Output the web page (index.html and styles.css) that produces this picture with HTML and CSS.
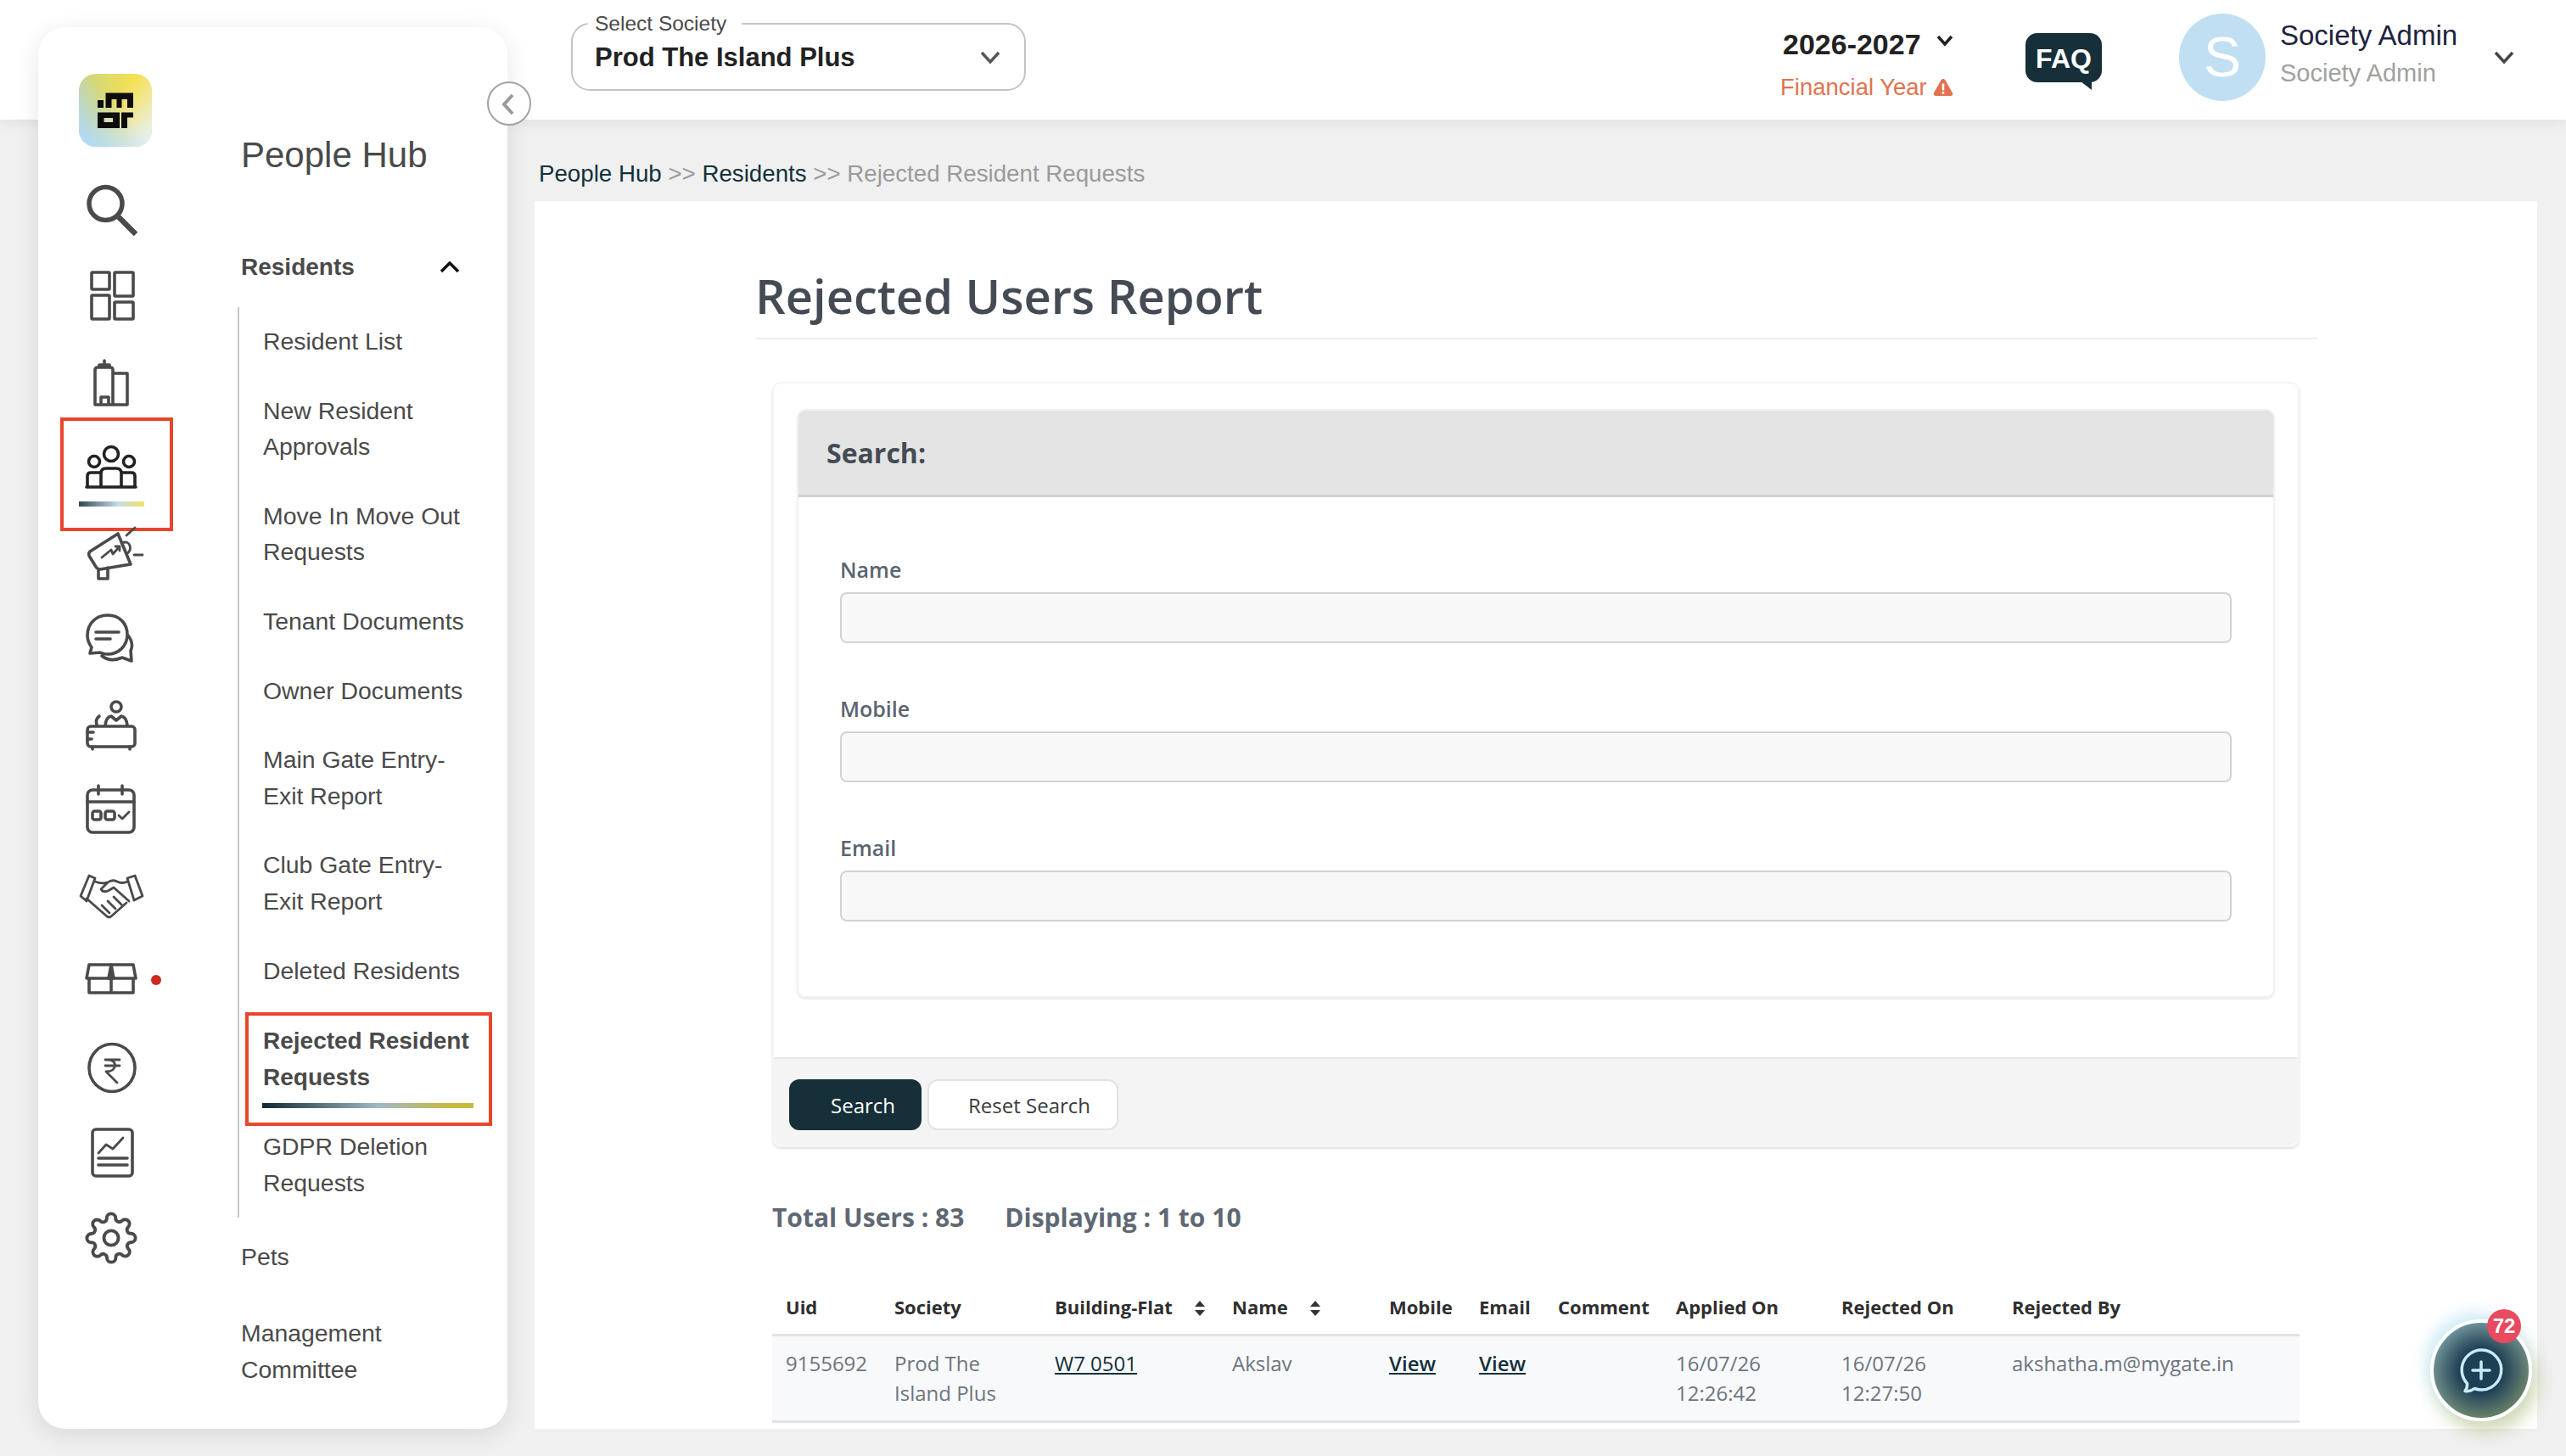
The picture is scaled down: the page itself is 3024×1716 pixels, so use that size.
FILE: index.html
```html
<!DOCTYPE html>
<html lang="en">
    <head>
        <meta charset="UTF-8">
        <meta name="viewport" content="width=device-width, initial-scale=1.0">
        <title>Rejected Users Report</title>
        <link rel="stylesheet" href="styles.css">
    </head>
    <body>
        <div class="app">
            <header class="topbar">
                <fieldset class="society-select">
                    <legend>Select Society</legend>
                    <span class="society-name">Prod The Island Plus</span>
                    <svg class="society-caret" viewBox="0 0 24 16"><path d="M2 2l10 11L22 2"/></svg>
                </fieldset>
                <div class="year-block">
                    <div class="year-value">
                        <span>2026-2027</span>
                        <svg class="year-caret" viewBox="0 0 20 14"><path d="M2 2l8 9 8-9"/></svg>
                    </div>
                    <div class="year-label">
                        <span>Financial Year</span>
                        <svg class="warn-icon" viewBox="0 0 24 22"><path d="M12 1c1 0 2 .6 2.500 1.500l8.500 15c1 1.800-.2 3.500-2 3.500H3c-1.800 0-3-1.700-2-3.500l8.500-15C10 1.600 11 1 12 1z" fill="#e0734f"/><rect x="10.700" y="6.500" width="2.600" height="8" fill="#fff"/><rect x="10.700" y="16" width="2.600" height="2.600" fill="#fff"/></svg>
                    </div>
                </div>
                <div class="faq-bubble">FAQ</div>
                <div class="avatar">S</div>
                <div class="user-block">
                    <div class="user-name">Society Admin</div>
                    <div class="user-role">Society Admin</div>
                </div>
                <svg class="user-caret" viewBox="0 0 24 16"><path d="M2 2l10 11L22 2"/></svg>
            </header>

            <aside class="sidebar">
                <button class="collapse-btn">
                    <svg viewBox="0 0 20 28"><path d="M15 3L5 14l10 11"/></svg>
                </button>
                <nav class="rail">
                    <svg class="logo" viewBox="0 0 86 86">
                        <defs>
                            <linearGradient id="logoBlue" x1="0" y1="1" x2="0.8" y2="0.2">
                                <stop offset="0.1" stop-color="#b0daf8"/>
                                <stop offset="0.7" stop-color="#b0daf8" stop-opacity="0"/>
                            </linearGradient>
                            <linearGradient id="logoBase" x1="0" y1="0" x2="1" y2="0">
                                <stop offset="0" stop-color="#c9d58a"/>
                                <stop offset="0.75" stop-color="#f5e04f"/>
                            </linearGradient>
                            <linearGradient id="logoFade" x1="0.4" y1="0.4" x2="1" y2="1">
                                <stop offset="0" stop-color="#f0f0dc" stop-opacity="0"/>
                                <stop offset="0.8" stop-color="#e8f0ea"/>
                            </linearGradient>
                        </defs>
                        <rect width="86" height="86" rx="20" fill="url(#logoBase)"/>
                        <rect width="86" height="86" rx="20" fill="url(#logoFade)"/>
                        <rect width="86" height="86" rx="20" fill="url(#logoBlue)"/>
                        <path d="M22 31h7v9h-7zM31.500 22.500H64V40h-7V30h-6.500v10h-6V30H38.500v10h-7zM22 45.500h26V64H22zM29.500 52v5H40v-5zM50 45.500h14v6h-7V64h-7z" fill="#0c0c0c" fill-rule="evenodd"/>
                    </svg>
                    <div class="rail-slot">
                        <svg class="rail-icon" viewBox="0 0 72 72"><circle cx="29.500" cy="29" r="19.500" stroke-width="5.500"/><path d="M44 44l21 21" stroke-width="6.500" stroke-linecap="butt"/></svg>
                    </div>
                    <div class="rail-slot">
                        <svg class="rail-icon" viewBox="0 0 72 72"><rect x="13" y="9" width="21" height="20" rx="1"/><rect x="40" y="9" width="22" height="28" rx="1"/><rect x="13" y="36" width="21" height="28" rx="1"/><rect x="40" y="44" width="22" height="20" rx="1"/></svg>
                    </div>
                    <div class="rail-slot">
                        <svg class="rail-icon" viewBox="0 0 72 72"><path d="M17 64V23q0-3 3-3h15q3 0 3 3v41zM38 27h17v37H38M22 20v-3h12v3M28 17v-5M24 64V55h9v9"/></svg>
                    </div>
                    <div class="rail-slot is-active">
                        <svg class="rail-icon is-dark" viewBox="0 0 72 72"><circle cx="36" cy="21" r="8.500"/><circle cx="16" cy="30" r="6.500"/><circle cx="57" cy="30" r="6.500"/><path d="M8 60V47q0-4 4-4h12M64 60V47q0-4-4-4H48M24 60V44q0-6 6-6h12q6 0 6 6v16M7 60h58"/></svg>
                        <span class="rail-bar"></span>
                        <span class="mark-box rail-mark"></span>
                    </div>
                    <div class="rail-slot">
                        <svg class="rail-icon" viewBox="0 0 72 72"><path d="M11 35L44 14l15 36-36 6q-3 0-5-3l-8-13q-1-3 1-5zM21 56v11h11V54"/><path class="thin" d="M25 42l11-9 2 5 8-9M41 29h5v5M48 25q8-3 10 3t-4 10M63 39h10M54 16l10-9"/></svg>
                    </div>
                    <div class="rail-slot">
                        <svg class="rail-icon" viewBox="0 0 72 72"><path d="M11 54l2-7q-5-7-5-14c0-14 10-24 24-24s23 10 23 23-10 23-23 23q-5 0-9-2zM18 29h27M18 37h17M56 33q7 9 3 18l1 12-11-4q-14 6-24-2"/></svg>
                    </div>
                    <div class="rail-slot">
                        <svg class="rail-icon" viewBox="0 0 72 72"><circle cx="42" cy="16" r="6"/><path d="M29 38q1-10 7-11l6 5 6-5q6 1 7 11M19 37q-2-6 3-10"/><rect x="8" y="39" width="56" height="24" rx="4"/><path d="M8 46h7M8 54h5M14 63v3M58 63v3"/></svg>
                    </div>
                    <div class="rail-slot">
                        <svg class="rail-icon" viewBox="0 0 72 72"><rect x="8" y="13" width="55" height="50" rx="6"/><path d="M8 27h55M21 8v10M49 8v10"/><path class="thin" d="M45 43l4 4 8-8"/><rect x="14" y="38" width="10" height="10" rx="2.500"/><rect x="29" y="38" width="11" height="10" rx="2.500"/></svg>
                    </div>
                    <div class="rail-slot">
                        <svg class="rail-icon" viewBox="0 0 72 72"><path class="thin" d="M0 37l10-24 7 3-10 27zM73 37L64 13l-9 3 8 26zM17 20q8 3 14 1M55 20q-6 3-12 0-6-3-11 1L24 29q3 5 10 1l5-3 18 16M7 40l24 21q3 2 5 0l18-16M25 48l9 9M32 43l9 9M39 38l9 9"/></svg>
                    </div>
                    <div class="rail-slot">
                        <svg class="rail-icon" viewBox="0 0 72 72"><path d="M10 33V50H62V33M7 33L10 17H62L65 33zM36 17V50"/><path d="M33 33l3-16 3 16z" fill="#4a4a4a"/></svg>
                        <span class="rail-dot"></span>
                    </div>
                    <div class="rail-slot">
                        <svg class="rail-icon" viewBox="0 0 72 72"><ellipse cx="37" cy="37.500" rx="27" ry="28"/><path class="thin" d="M29 28h17M29 35h17M33 28c10 0 11 14-3 14l13 13"/></svg>
                    </div>
                    <div class="rail-slot">
                        <svg class="rail-icon" viewBox="0 0 72 72"><rect x="14" y="9" width="47" height="55" rx="4"/><path class="thin" d="M21 37l9-10 8 5 12-13"/><path d="M21 43h34M21 51h34"/></svg>
                    </div>
                    <div class="rail-slot">
                        <svg class="rail-icon" viewBox="0 0 72 72"><g transform="translate(4.800 4.800) scale(2.600)" stroke-width="1.500"><circle cx="12" cy="12" r="3.300"/><path d="M19.400 15a1.650 1.650 0 0 0 .33 1.820l.06.06a2 2 0 0 1 0 2.830 2 2 0 0 1-2.830 0l-.06-.06a1.650 1.650 0 0 0-1.820-.33 1.650 1.650 0 0 0-1 1.510V21a2 2 0 0 1-2 2 2 2 0 0 1-2-2v-.09A1.650 1.650 0 0 0 9 19.400a1.650 1.650 0 0 0-1.820.33l-.06.06a2 2 0 0 1-2.830 0 2 2 0 0 1 0-2.830l.06-.06a1.650 1.650 0 0 0 .33-1.820 1.650 1.650 0 0 0-1.510-1H3a2 2 0 0 1-2-2 2 2 0 0 1 2-2h.09A1.650 1.650 0 0 0 4.600 9a1.650 1.650 0 0 0-.33-1.820l-.06-.06a2 2 0 0 1 0-2.830 2 2 0 0 1 2.830 0l.06.06a1.650 1.650 0 0 0 1.820.33H9a1.650 1.650 0 0 0 1-1.510V3a2 2 0 0 1 2-2 2 2 0 0 1 2 2v.09a1.650 1.650 0 0 0 1 1.510 1.650 1.650 0 0 0 1.820-.33l.06-.06a2 2 0 0 1 2.830 0 2 2 0 0 1 0 2.830l-.06.06a1.650 1.650 0 0 0-.33 1.820V9a1.650 1.650 0 0 0 1.510 1H21a2 2 0 0 1 2 2 2 2 0 0 1-2 2h-.09a1.650 1.650 0 0 0-1.510 1z"/></g></svg>
                    </div>
                </nav>
                <div class="menu">
                    <h2 class="menu-title">People Hub</h2>
                    <div class="menu-section">
                        <span>Residents</span>
                        <svg class="section-caret" viewBox="0 0 24 14"><path d="M2 12L12 2l10 10"/></svg>
                    </div>
                    <ul class="submenu">
                        <li>Resident List</li>
                        <li>New Resident Approvals</li>
                        <li>Move In Move Out Requests</li>
                        <li>Tenant Documents</li>
                        <li>Owner Documents</li>
                        <li>Main Gate Entry-<br>Exit Report</li>
                        <li>Club Gate Entry-<br>Exit Report</li>
                        <li>Deleted Residents</li>
                        <li class="is-current">
                            Rejected Resident Requests
                            <span class="current-bar"></span>
                            <span class="mark-box current-mark"></span>
                        </li>
                        <li>GDPR Deletion Requests</li>
                    </ul>
                    <div class="menu-link">Pets</div>
                    <div class="menu-link">Management Committee</div>
                </div>
            </aside>

            <main class="content">
                <div class="breadcrumb">
                    <a>People Hub</a> <span class="crumb-sep">&gt;&gt;</span> <a>Residents</a> <span class="crumb-sep">&gt;&gt;</span> <span class="crumb-last">Rejected Resident Requests</span>
                </div>
                <section class="panel">
                    <h1 class="page-title">Rejected Users Report</h1>
                    <div class="report">
                        <div class="search-card">
                            <div class="search-box">
                                <div class="search-head">Search:</div>
                                <div class="search-body">
                                    <label class="field">
                                        <span>Name</span>
                                        <input type="text">
                                    </label>
                                    <label class="field">
                                        <span>Mobile</span>
                                        <input type="text">
                                    </label>
                                    <label class="field">
                                        <span>Email</span>
                                        <input type="text">
                                    </label>
                                </div>
                            </div>
                            <div class="search-actions">
                                <button class="btn btn-dark">Search</button>
                                <button class="btn btn-light">Reset Search</button>
                            </div>
                        </div>

                        <div class="summary">
                            <span>Total Users : 83</span>
                            <span>Displaying : 1 to 10</span>
                        </div>

                        <table class="users-table">
                            <colgroup>
                                <col class="col-uid"><col class="col-society"><col class="col-flat"><col class="col-name"><col class="col-mobile"><col class="col-email"><col class="col-comment"><col class="col-applied"><col class="col-rejected"><col>
                            </colgroup>
                            <thead>
                                <tr>
                                    <th>Uid</th>
                                    <th>Society</th>
                                    <th>Building-Flat <svg class="sort" viewBox="0 0 14 18"><path d="M7 0l6 7H1zM7 18l6-7H1z"/></svg></th>
                                    <th>Name <svg class="sort" viewBox="0 0 14 18"><path d="M7 0l6 7H1zM7 18l6-7H1z"/></svg></th>
                                    <th>Mobile</th>
                                    <th>Email</th>
                                    <th>Comment</th>
                                    <th>Applied On</th>
                                    <th>Rejected On</th>
                                    <th>Rejected By</th>
                                </tr>
                            </thead>
                            <tbody>
                                <tr>
                                    <td>9155692</td>
                                    <td>Prod The Island Plus</td>
                                    <td><a>W7 0501</a></td>
                                    <td>Akslav</td>
                                    <td><a class="strong-link">View</a></td>
                                    <td><a class="strong-link">View</a></td>
                                    <td></td>
                                    <td>16/07/26<br>12:26:42</td>
                                    <td>16/07/26<br>12:27:50</td>
                                    <td>akshatha.m@mygate.in</td>
                                </tr>
                            </tbody>
                        </table>
                    </div>
                </section>
            </main>

            <button class="chat-fab">
                <svg viewBox="0 0 60 60"><path d="M30 6a23.500 23.500 0 1 1-8 45.500q-5 4-11 3 3-4 2.500-9A23.500 23.500 0 0 1 30 6zM30 20v20M20 30h20"/></svg>
                <span class="chat-badge">72</span>
            </button>
        </div>
    </body>
</html>
```
FILE: styles.css
```css
* {
    box-sizing: border-box;
}
body {
    margin: 0;
    background-color: #f0f0f0;
    color: #4a4a4a;
    font-family: "Liberation Sans", Arial, sans-serif;
    overflow: hidden;
}
svg {
    display: block;
    fill: none;
}
.app {
    position: relative;
    display: grid;
    grid-template-columns: 630px 1fr;
    grid-template-rows: 141px 1fr;
    height: 1716px;
    overflow: hidden;
}

/* top bar */
.topbar {
    grid-column: 1 / 3;
    grid-row: 1;
    display: flex;
    align-items: flex-start;
    padding-left: 673px;
    background-color: #fff;
    box-shadow: 0 2px 16px rgba(0, 0, 0, 0.08);
}
.society-select {
    display: flex;
    align-items: center;
    justify-content: space-between;
    width: 536px;
    height: 93px;
    margin: 14px 0 0;
    padding: 0 28px 12px 26px;
    border: 2px solid #c4c4c4;
    border-radius: 22px;
    min-inline-size: 0;
}
.society-select legend {
    margin-left: -8px;
    padding: 0 18px 0 8px;
    color: #4a4a4a;
    font-size: 24.500px;
    line-height: 28px;
}
.society-name {
    color: #222;
    font-size: 31px;
    font-weight: 700;
}
.society-caret {
    width: 24px;
    height: 16px;
    stroke: #555;
    stroke-width: 3.5;
}
.year-block {
    flex: none;
    width: 210px;
    margin: 32px 0 0 889px;
}
.year-value {
    display: flex;
    align-items: center;
    padding-left: 3px;
    color: #222;
    font-size: 34px;
    font-weight: 700;
    line-height: 40px;
}
.year-caret {
    width: 20px;
    height: 14px;
    margin: -8px 0 0 18px;
    stroke: #222;
    stroke-width: 3.5;
}
.year-label {
    display: flex;
    align-items: center;
    gap: 7px;
    margin-top: 11px;
    color: #e0734f;
    font-size: 27.500px;
    line-height: 40px;
    white-space: nowrap;
}
.warn-icon {
    flex: none;
    width: 24px;
    height: 22px;
}
.faq-bubble {
    position: relative;
    flex: none;
    width: 90px;
    height: 58px;
    margin: 39px 0 0 79px;
    border-radius: 14px;
    background-color: #162f38;
    color: #fff;
    font-size: 32px;
    font-weight: 700;
    line-height: 60px;
    text-align: center;
}
.faq-bubble::after {
    content: "";
    position: absolute;
    right: 12px;
    bottom: -9px;
    width: 13px;
    height: 10px;
    background-color: #162f38;
    clip-path: polygon(0 0, 100% 0, 100% 100%);
}
.avatar {
    flex: none;
    width: 102px;
    height: 103px;
    margin: 16px 0 0 91px;
    border-radius: 50%;
    background-color: #c1dff2;
    color: #fff;
    font-size: 66px;
    line-height: 103px;
    text-align: center;
}
.user-block {
    flex: none;
    width: 250px;
    margin: 22px 0 0 17px;
}
.user-name {
    color: #1d2340;
    font-size: 33px;
    line-height: 40px;
}
.user-role {
    margin-top: 6px;
    color: #a0a0a0;
    font-size: 29px;
    line-height: 36px;
}
.user-caret {
    width: 24px;
    height: 16px;
    margin: 60px 0 0 2px;
    stroke: #444;
    stroke-width: 3.5;
}

/* sidebar */
.sidebar {
    position: relative;
    grid-column: 1;
    grid-row: 1 / 3;
    display: flex;
    margin: 32px 32px 32px 45px;
    border-radius: 32px;
    background-color: #fff;
    box-shadow: 0 6px 28px rgba(0, 0, 0, 0.1);
}
.collapse-btn {
    position: absolute;
    top: 64px;
    left: 529px;
    width: 52px;
    height: 52px;
    padding: 11px 13px;
    border: 2px solid #a3a3a3;
    border-radius: 50%;
    background-color: #fff;
}
.collapse-btn svg {
    width: 20px;
    height: 28px;
    stroke: #9a9a9a;
    stroke-width: 4;
}
.rail {
    flex: none;
    display: flex;
    flex-direction: column;
    align-items: center;
    width: 172px;
    padding-top: 55px;
}
.logo {
    flex: none;
    width: 86px;
    height: 86px;
    margin: 0 0 23px 10px;
}
.rail-slot {
    position: relative;
    flex: none;
    display: flex;
    align-items: center;
    justify-content: center;
    width: 100%;
    height: 101px;
}
.rail-icon {
    width: 72px;
    height: 72px;
    overflow: visible;
    stroke: #4a4a4a;
    stroke-width: 3.6;
    stroke-linejoin: round;
    stroke-linecap: round;
}
.rail-icon.is-dark {
    stroke: #222;
}
.rail-icon .thin {
    stroke-width: 2.800;
}
.rail-bar {
    position: absolute;
    left: 48px;
    bottom: 3px;
    width: 77px;
    height: 6px;
    background: linear-gradient(90deg, #2f4a55, #c6dbe8 60%, #f2e268);
}
.rail-dot {
    position: absolute;
    left: 133px;
    top: 44px;
    width: 12px;
    height: 12px;
    border-radius: 50%;
    background-color: #cc2a20;
}
.mark-box {
    position: absolute;
    border: 4px solid #e8452c;
}
.rail-mark {
    top: -7px;
    left: 26px;
    width: 133px;
    height: 134px;
}

/* menu column */
.menu {
    flex: 1;
    padding: 126px 0 0 67px;
    font-size: 28.400px;
    line-height: 42.6px;
}
.menu-title {
    margin: 0;
    color: #4a4a4a;
    font-size: 42px;
    font-weight: 400;
    line-height: 50px;
}
.menu-section {
    display: flex;
    align-items: center;
    justify-content: space-between;
    width: 258px;
    margin-top: 86px;
    font-size: 28px;
    font-weight: 700;
}
.section-caret {
    width: 24px;
    height: 14px;
    stroke: #111;
    stroke-width: 3.5;
}
.submenu {
    width: 289px;
    margin: 25px 0 0 -4px;
    padding: 0;
    border-left: 2px solid #c8c8c8;
    list-style: none;
}
.submenu li {
    position: relative;
    padding: 19.5px 0 19.5px 28px;
}
.submenu li.is-current {
    padding-top: 21.5px;
    font-size: 28px;
    font-weight: 700;
}
.current-bar {
    position: absolute;
    left: 27px;
    bottom: 5px;
    width: 249px;
    height: 6px;
    background: linear-gradient(90deg, #0f2a33, #9fb8c6 55%, #c9b93a 90%);
}
.current-mark {
    top: 8px;
    left: 7px;
    width: 291px;
    height: 134px;
}
.menu-link {
    width: 270px;
    margin-top: 9px;
    padding: 19.5px 0;
}
.submenu + .menu-link {
    margin-top: 5px;
}

/* main */
.content {
    grid-column: 2;
    grid-row: 2;
    display: flex;
    flex-direction: column;
    min-height: 0;
    padding: 0 34px 32px 0;
}
.breadcrumb {
    flex: none;
    height: 96px;
    padding: 47px 0 0 5px;
    color: #12303a;
    font-size: 27.700px;
    line-height: 34px;
}
.crumb-sep {
    color: #9a9a9a;
}
.crumb-last {
    color: #9a9a9a;
}
.panel {
    flex: 1;
    min-height: 0;
    padding: 71px 259px 0 260px;
    background-color: #fff;
    font-family: "Open Sans", sans-serif;
    overflow: hidden;
}
.page-title {
    margin: 0;
    padding-bottom: 10px;
    border-bottom: 2px solid #eceeef;
    color: #454b54;
    font-size: 56px;
    font-weight: 600;
    line-height: 80px;
}
.report {
    margin: 50px 21px 0 20px;
}
.search-card {
    border: 2px solid #f4f4f4;
    border-radius: 10px;
    box-shadow: 0 2px 3px rgba(0, 0, 0, 0.12);
}
.search-box {
    margin: 30px 27px 70px;
    border: 2px solid #f1f1f1;
    border-radius: 10px;
    box-shadow: 0 2px 2px rgba(0, 0, 0, 0.08);
}
.search-head {
    height: 102px;
    padding-left: 33px;
    border-bottom: 3px solid #cfcfcf;
    border-radius: 8px 8px 0 0;
    background-color: #e4e4e4;
    color: #454b54;
    font-size: 32px;
    font-weight: 700;
    line-height: 100px;
}
.search-body {
    padding: 58px 49px 88px;
}
.field {
    display: block;
    margin-bottom: 50px;
    color: #5b6470;
    font-size: 25px;
    font-weight: 600;
}
.field:last-child {
    margin-bottom: 0;
}
.field span {
    display: block;
    line-height: 54px;
}
.field input {
    display: block;
    width: 100%;
    height: 60px;
    border: 2px solid #d2d2d2;
    border-radius: 8px;
    background-color: #f8f8f8;
}
.search-actions {
    display: flex;
    gap: 7px;
    height: 104px;
    padding: 24px 18px 0;
    border-top: 2px solid #e8e8e8;
    border-radius: 0 0 10px 10px;
    background-color: #f4f4f4;
}
.btn {
    height: 60px;
    font-family: "Open Sans", sans-serif;
    font-size: 24px;
    border-radius: 12px;
}
.btn-dark {
    padding: 0 31px 0 49px;
    border: none;
    background-color: #162f38;
    color: #fff;
}
.btn-light {
    padding: 0 31px 0 46px;
    border: 2px solid #e3e3e3;
    background-color: #fff;
    color: #3a3a3a;
}
.summary {
    display: flex;
    gap: 48px;
    margin-top: 61px;
    color: #5f6873;
    font-size: 30px;
    font-weight: 700;
    line-height: 44px;
}
.users-table {
    width: 100%;
    margin-top: 53px;
    border-collapse: separate;
    border-spacing: 0;
    table-layout: fixed;
    font-size: 24px;
}
.col-uid { width: 128px; }
.col-society { width: 189px; }
.col-flat { width: 209px; }
.col-name { width: 185px; }
.col-mobile { width: 106px; }
.col-email { width: 93px; }
.col-comment { width: 139px; }
.col-applied { width: 195px; }
.col-rejected { width: 201px; }
.users-table th {
    height: 65px;
    padding: 0 16px 3px;
    border-bottom: 3px solid #e3e3e3;
    color: #2f2f2f;
    font-size: 22px;
    font-weight: 700;
    text-align: left;
    white-space: nowrap;
}
.users-table td {
    padding: 14px 16px 15px;
    border-bottom: 3px solid #e3e3e3;
    background-color: #f8f9fb;
    color: #6c757d;
    line-height: 35px;
    vertical-align: top;
}
.users-table a {
    color: #12303a;
    text-decoration: underline;
}
.users-table .strong-link {
    font-weight: 600;
}
.sort {
    display: inline-block;
    width: 14px;
    height: 20px;
    margin-left: 19px;
    fill: #333;
    vertical-align: -3px;
}

/* floating chat button */
.chat-fab {
    position: absolute;
    top: 1555px;
    left: 2864px;
    width: 120px;
    height: 120px;
    padding: 26px;
    border: 4px solid #fff;
    border-radius: 50%;
    background: radial-gradient(circle, #1f3f55 32%, rgba(31, 63, 85, 0) 78%), linear-gradient(150deg, #7da6b6, #74875c);
    box-shadow: -5px -8px 18px rgba(170, 220, 240, 0.55), 6px 12px 20px rgba(150, 170, 90, 0.45);
}
.chat-fab svg {
    width: 60px;
    height: 60px;
    stroke: #c6ecf8;
    stroke-width: 3.500;
    stroke-linejoin: round;
    stroke-linecap: round;
}
.chat-badge {
    position: absolute;
    top: -16px;
    right: 9px;
    width: 40px;
    height: 40px;
    border-radius: 50%;
    background-color: #e84a60;
    color: #fff;
    font-family: "Liberation Sans", sans-serif;
    font-size: 24px;
    font-weight: 700;
    line-height: 40px;
    text-align: center;
}
```
